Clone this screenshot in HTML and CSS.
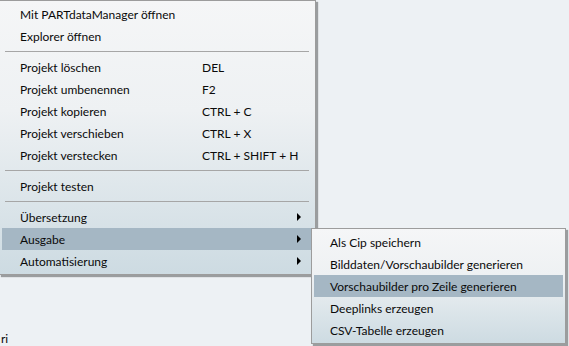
FILE: index.html
```html
<!DOCTYPE html>
<html lang="de">
<head>
  <meta charset="UTF-8">
  <title>Kontextmenü</title>
  <link rel="stylesheet" href="styles.css">
</head>
<body>
  <div class="page-text">ri</div>

  <div class="menu main-menu">
    <div class="item"><span class="label">Mit PARTdataManager öffnen</span></div>
    <div class="item"><span class="label">Explorer öffnen</span></div>
    <div class="sep"></div>
    <div class="item"><span class="label">Projekt löschen</span><span class="key">DEL</span></div>
    <div class="item"><span class="label">Projekt umbenennen</span><span class="key">F2</span></div>
    <div class="item"><span class="label">Projekt kopieren</span><span class="key">CTRL + C</span></div>
    <div class="item"><span class="label">Projekt verschieben</span><span class="key">CTRL + X</span></div>
    <div class="item"><span class="label">Projekt verstecken</span><span class="key">CTRL + SHIFT + H</span></div>
    <div class="sep"></div>
    <div class="item"><span class="label">Projekt testen</span></div>
    <div class="sep"></div>
    <div class="item sub"><span class="label">Übersetzung</span><span class="arrow"></span></div>
    <div class="item sub active"><span class="label">Ausgabe</span><span class="arrow"></span></div>
    <div class="item sub"><span class="label">Automatisierung</span><span class="arrow"></span></div>
  </div>

  <div class="menu sub-menu">
    <div class="item"><span class="label">Als Cip speichern</span></div>
    <div class="item"><span class="label">Bilddaten/Vorschaubilder generieren</span></div>
    <div class="item active"><span class="label">Vorschaubilder pro Zeile generieren</span></div>
    <div class="item"><span class="label">Deeplinks erzeugen</span></div>
    <div class="item"><span class="label">CSV-Tabelle erzeugen</span></div>
  </div>
</body>
</html>
```
FILE: styles.css
```css
body { margin: 0; background: #edf1f4; font-family: Lato, "Noto Sans", sans-serif; font-size: 12px; color: #0a0a0a; width: 569px; height: 346px; overflow: hidden; position: relative; }
.page-text { padding-top: 332px; padding-left: 1px; line-height: 13px; }

.menu { position: absolute; box-sizing: border-box; border: 1px solid #9c9c9c; padding: 2px 2px; background: linear-gradient(to bottom, #f5f6f7 0%, #eef1f3 40%, #cddbe2 100%); box-shadow: 2px 2px 1px rgba(0,0,0,0.35); }
.main-menu { left: -1px; top: 0; width: 317px; }
.sub-menu { left: 311px; top: 228px; width: 255px; }

.item { display: flex; align-items: center; height: 22px; }
.main-menu .item { padding-left: 18px; }
.sub-menu .item { padding-left: 16px; }
.item.active { background: #a5b7c4; }

.main-menu .label { width: 182px; }
.key { flex: 1; }
.sub .label { flex: 1; }
.arrow { width: 0; height: 0; border-top: 4px solid transparent; border-bottom: 4px solid transparent; border-left: 4px solid #000; margin-right: 12px; }

.sep { height: 1px; background: #a6a6a6; margin: 4px 4px 4px 3px; }
```
